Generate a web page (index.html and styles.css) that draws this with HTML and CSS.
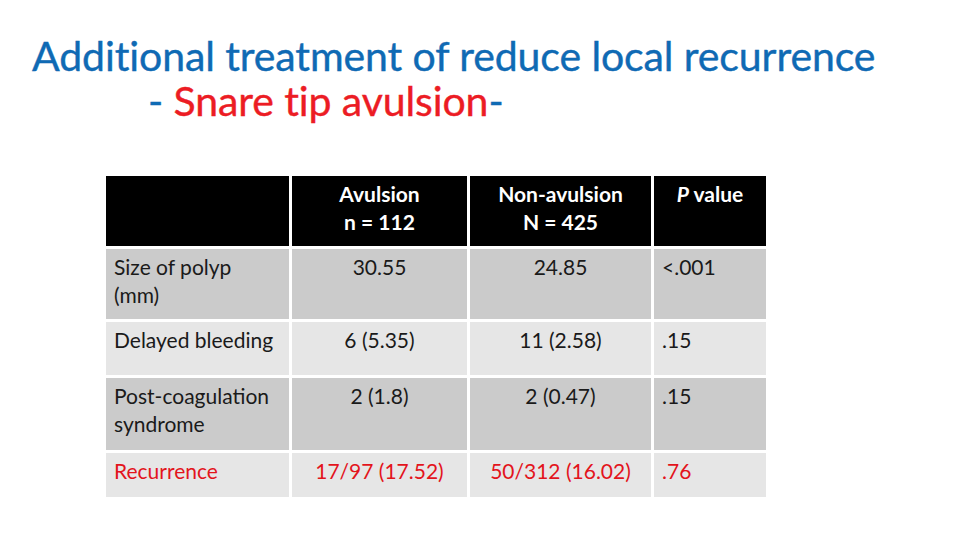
FILE: index.html
```html
<!DOCTYPE html>
<html>
<head>
<meta charset="utf-8">
<link rel="stylesheet" href="styles.css">
</head>
<body>
<div class="slide">
  <h1 class="title">
    <span class="line1">Additional treatment of reduce local recurrence</span>
    <span class="line2"><span class="dash">- </span><span class="red">Snare tip avulsion</span><span class="dash">-</span></span>
  </h1>
  <div class="table">
    <div class="cell head"></div>
    <div class="cell head center">Avulsion<br>n = 112</div>
    <div class="cell head center">Non-avulsion<br>N = 425</div>
    <div class="cell head center"><i>P</i> value</div>

    <div class="cell dark r1">Size of polyp<br>(mm)</div>
    <div class="cell dark r1 center">30.55</div>
    <div class="cell dark r1 center">24.85</div>
    <div class="cell dark r1">&lt;.001</div>

    <div class="cell light">Delayed bleeding</div>
    <div class="cell light center">6 (5.35)</div>
    <div class="cell light center">11 (2.58)</div>
    <div class="cell light">.15</div>

    <div class="cell dark">Post-coagulation<br>syndrome</div>
    <div class="cell dark center">2 (1.8)</div>
    <div class="cell dark center">2 (0.47)</div>
    <div class="cell dark">.15</div>

    <div class="cell light red">Recurrence</div>
    <div class="cell light red center">17/97 (17.52)</div>
    <div class="cell light red center">50/312 (16.02)</div>
    <div class="cell light red">.76</div>
  </div>
</div>
</body>
</html>
```
FILE: styles.css
```css
html, body {
  margin: 0;
  padding: 0;
  background: #ffffff;
}
.slide {
  width: 960px;
  height: 540px;
  position: relative;
  overflow: hidden;
  font-family: Lato, "Open Sans", sans-serif;
}
.title {
  margin: 0;
  padding: 33px 0 0 32px;
  font-weight: normal;
  font-size: 41px;
  line-height: 45px;
  letter-spacing: -0.1px;
  color: #0f6ab4;
  -webkit-text-stroke: 0.4px currentColor;
}
.title span.line1,
.title span.line2 {
  display: block;
}
.title .line2 {
  padding-left: 116px;
}
.title .red {
  color: #ec1c24;
}
.table {
  margin: 53px 0 0 106px;
  display: grid;
  grid-template-columns: 183px 175px 181px 112px;
  grid-template-rows: 70px 70px 53px 72px 44px;
  gap: 3px;
  width: 660px;
  font-size: 21px;
  line-height: 28px;
  color: #1a1a1a;
}
.cell {
  padding: 4px 8px 0 8px;
}
.head {
  background: #000000;
  color: #ffffff;
  font-weight: bold;
  padding-top: 4px;
}
.dark {
  background: #cbcbcb;
}
.light {
  background: #e6e6e6;
}
.center {
  text-align: center;
}
.table .red {
  color: #e3141c;
}
```
